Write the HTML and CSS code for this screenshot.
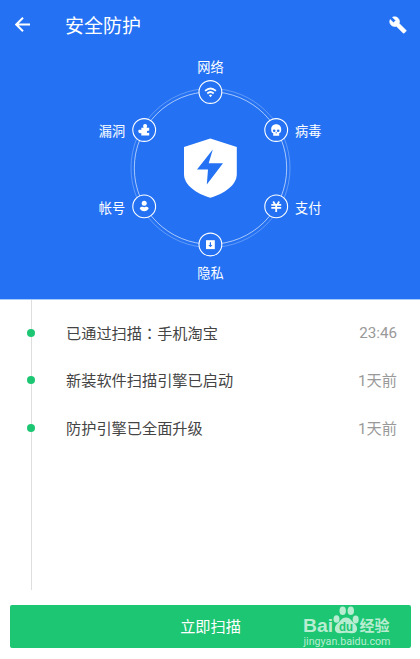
FILE: index.html
```
<!DOCTYPE html>
<html lang="zh-CN">
<head>
    <meta charset="UTF-8">
    <title>安全防护</title>
    <link rel="stylesheet" href="styles.css">
</head>
<body>
<div class="top">
    <div class="header">
        <svg class="back" width="16" height="16" viewBox="0 0 16 16">
            <path d="M8 .8L1.2 7.5L8 14.2M1.5 7.5H15"/>
        </svg>
        <h1>安全防护</h1>
        <svg class="tool" width="18" height="18" viewBox="0 0 24 24">
            <path d="M22.7 19l-9.1-9.1c.9-2.3.4-5-1.5-6.9-2-2-5-2.4-7.4-1.3L9 6 6 9 1.6 4.7C.4 7.1.9 10.1 2.9 12.1c1.9 1.9 4.6 2.4 6.9 1.5l9.1 9.1c.4.4 1 .4 1.4 0l2.3-2.3c.5-.4.5-1.1.1-1.4z"/>
        </svg>
    </div>
    <svg class="radar" width="420" height="249" viewBox="0 50 420 249">
        <circle class="ring-outer" cx="210.5" cy="168" r="79.5"/>
        <circle class="ring" cx="210.5" cy="168" r="76.2"/>
        <path class="white" d="M210.3 138.6L236.8 147V174C236.8 185.5 224 193.5 210.3 197.8C196.6 193.5 184 185.5 184 174V147Z"/>
        <path class="blue" d="M212.8 149.5L197 169.5H208L206.8 184.5L223 163.3H208.7Z"/>

        <g class="nodes">
            <circle cx="210.4" cy="92" r="11.4"/>
            <circle cx="144.2" cy="130" r="11.4"/>
            <circle cx="276.2" cy="130" r="11.4"/>
            <circle cx="144.2" cy="206.4" r="11.4"/>
            <circle cx="276.2" cy="206.4" r="11.4"/>
            <circle cx="210.4" cy="244.5" r="11.4"/>
        </g>

        <!-- wifi -->
        <g class="wifi">
            <path d="M205.1 90.9Q210.5 86.1 215.9 90.9"/>
            <path d="M207.3 93.5Q210.5 90.6 213.7 93.5"/>
            <path class="dot" d="M208.9 95.2Q210.5 94 212.1 95.2L210.5 97.2Z"/>
        </g>
        <!-- puzzle -->
        <path class="white" d="M141.3 127.8H143.6C142.5 125.4 143.4 123.9 145.1 123.9S147.7 125.4 146.6 127.8H149.2V130.8C147.5 130.3 146.9 131 146.9 131.900S147.600 133.200 149.200 132.800V135.600H141.300V133C139.300 133.600 138.300 132.700 138.300 131.300S139.500 129.500 141.300 130.200Z"/>
        <!-- skull -->
        <path class="white" d="M276.2 124.3C272.9 124.3 271.2 126.5 271.2 129.4C271.2 131.5 271.7 132.7 273.2 133.2V135.8H279.2V133.2C280.7 132.7 281.2 131.5 281.2 129.4C281.2 126.5 279.5 124.3 276.2 124.3Z"/>
        <circle class="blue" cx="274.2" cy="130.7" r="1.3"/>
        <circle class="blue" cx="278.2" cy="130.7" r="1.3"/>
        <path class="blue" d="M276.2 131.7L277 133.2H275.4Z"/>
        <!-- user -->
        <circle class="white" cx="144.2" cy="203.3" r="2.5"/>
        <path class="white" d="M139.7 208.3C140.3 207 141.5 206.7 142.5 206.7L144.2 207.3L145.9 206.7C146.9 206.7 148.1 207 148.7 208.3C147.3 212.2 141.1 212.2 139.7 208.3Z"/>
        <!-- yuan -->
        <path class="yuan" d="M273.2 201.5L275 204.5M279.2 201.5L277.4 204.5M271.3 204.9H281.2M271.3 207.9H281.2M276.2 204.5V212"/>
        <!-- private box -->
        <path class="white" d="M206 240.2H214.8V249.1H206Z"/>
        <path class="blue" d="M209.8 242.2H211V245H212.5L210.4 247.3L208.3 245H209.8Z"/>

        <g class="labels">
            <text x="210.5" y="71.9">网络</text>
            <text x="112" y="136.2">漏洞</text>
            <text x="308.3" y="136.2">病毒</text>
            <text x="112" y="212.5">帐号</text>
            <text x="308.3" y="212.5">支付</text>
            <text x="210.5" y="277.5">隐私</text>
        </g>
    </svg>
</div>

<div class="log">
    <div class="item"><i></i><span>已通过扫描<b lang="zh-TW">：</b>手机淘宝</span><em class="time">23:46</em></div>
    <div class="item"><i></i><span>新装软件扫描引擎已启动</span><em>1天前</em></div>
    <div class="item"><i></i><span>防护引擎已全面升级</span><em>1天前</em></div>
</div>

<button class="scan">立即扫描</button>

<svg class="watermark" width="94" height="50" viewBox="300 602 94 50">
    <text class="brand" x="303" y="631.8" textLength="30" lengthAdjust="spacingAndGlyphs">Bai</text>
    <ellipse cx="336.5" cy="619" rx="3" ry="3.8"/>
    <ellipse cx="342.7" cy="610.8" rx="3.2" ry="4.3"/>
    <ellipse cx="350.8" cy="610.8" rx="3.2" ry="4.3"/>
    <ellipse cx="355.7" cy="619.5" rx="3" ry="4"/>
    <path d="M346 617.5C341.5 617.5 341 621 337.5 623.5C333 627.5 334.5 634 340.5 633.2Q346 632.5 351.5 633.2C357.5 634 359 627.5 354.5 623.5C351 621 350.5 617.5 346 617.5Z"/>
    <text class="du" x="339" y="630.8" textLength="14" lengthAdjust="spacingAndGlyphs">du</text>
    <text class="cn" x="359.5" y="631.3" textLength="30">经验</text>
    <text class="site" x="303.5" y="645" textLength="87" lengthAdjust="spacingAndGlyphs">jingyan.baidu.com</text>
</svg>
</body>
</html>
```
FILE: styles.css
```
body {
  margin: 0;
  height: 659px;
  overflow: hidden;
  background: #fff;
  font-family: Roboto, "Noto Sans CJK SC", sans-serif;
}

.top {
  height: 299px;
  background: #2472f3;
  border-bottom: 1px solid #a9cbfa;
}

.header {
  display: flex;
  align-items: center;
  height: 50px;
  padding: 0 13px 0 15px;
}

.back {
  fill: none;
  stroke: #fff;
  stroke-width: 2;
}

.header h1 {
  flex: 1;
  margin: 0 0 0 34px;
  padding-top: 3px;
  color: #fff;
  font-size: 19px;
  font-weight: 400;
  line-height: 47px;
}

.tool {
  fill: #fff;
  stroke: #fff;
  stroke-width: .8;
}

.radar {
  display: block;
}

.ring, .ring-outer, .nodes circle {
  fill: none;
  stroke: #fff;
}

.ring {
  stroke-opacity: .6;
}

.ring-outer {
  stroke-opacity: .28;
}

.nodes circle {
  fill: #2472f3;
  stroke-width: 1.1;
}

.white {
  fill: #fff;
}

.blue {
  fill: #2472f3;
}

.wifi path, .yuan {
  fill: none;
  stroke: #fff;
  stroke-width: 1.8;
}

.wifi .dot {
  fill: #fff;
  stroke: none;
}

.labels {
  fill: #fff;
  font-size: 13.2px;
  text-anchor: middle;
}

.log {
  height: 281px;
  margin-left: 31px;
  padding-top: 9px;
  border-left: 1px solid #dedede;
}

.item {
  display: flex;
  align-items: center;
  height: 47.6px;
  padding-right: 23px;
  color: #444;
  font-size: 15.2px;
}

.item i {
  width: 8px;
  height: 8px;
  margin-left: -5px;
  border-radius: 50%;
  background: #1dc673;
}

.item span {
  flex: 1;
  margin-left: 31px;
  padding-bottom: 2px;
}

.item b {
  font-family: "Noto Sans CJK TC", sans-serif;
  font-weight: 400;
  line-height: 1;
}

.item em {
  padding-bottom: 2px;
  color: #999;
  font-style: normal;
}

.item .time {
  padding: 1px 0 0;
}

.scan {
  display: block;
  width: 401px;
  height: 43px;
  margin: 15px 0 0 10px;
  padding: 0 0 4px;
  border: none;
  border-radius: 2px;
  background: #1dc673;
  color: #fff;
  font-family: inherit;
  font-size: 15.2px;
}

/* logo sits over the button */
.watermark {
  position: absolute;
  left: 300px;
  top: 602px;
  fill: #b9edd1;
}

.brand {
  font: bold 18px "Liberation Sans", sans-serif;
}

.watermark .du {
  fill: #1dc673;
  font: bold 12px "Liberation Sans", sans-serif;
}

.cn {
  font-size: 15px;
  font-weight: 700;
}

.site {
  font: 10px Roboto, sans-serif;
}
```
